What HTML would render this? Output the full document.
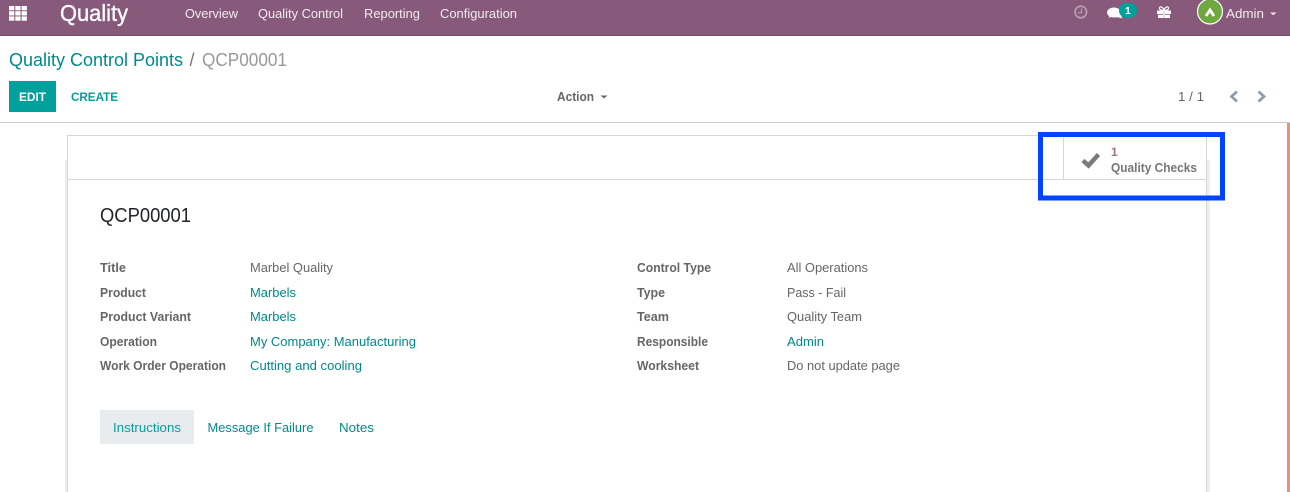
<!DOCTYPE html>
<html><head><meta charset="utf-8"><style>
html,body{margin:0;padding:0;background:#fff;width:1290px;height:492px;overflow:hidden}
svg{display:block}
text{font-family:"Liberation Sans",sans-serif;font-size:13px}
.n{fill:#f3eaf0;font-size:13px}
.b{font-weight:bold;fill:#666;font-size:12.5px}
.v{fill:#666}
.l{fill:#00898c}
</style></head><body>
<svg width="1290" height="492" viewBox="0 0 1290 492" xmlns="http://www.w3.org/2000/svg">
<rect width="1290" height="492" fill="#fff"/>
<rect width="1290" height="35" fill="#875A7B"/>
<rect y="35" width="1290" height="1" fill="#6f4a66"/>
<g fill="#fff">
<rect x="9" y="6" width="5.300" height="4.300"/><rect x="15.300" y="6" width="5.300" height="4.300"/><rect x="21.600" y="6" width="5.300" height="4.300"/>
<rect x="9" y="11.200" width="5.300" height="4.300"/><rect x="15.300" y="11.200" width="5.300" height="4.300"/><rect x="21.600" y="11.200" width="5.300" height="4.300"/>
<rect x="9" y="16.400" width="5.300" height="4.300"/><rect x="15.300" y="16.400" width="5.300" height="4.300"/><rect x="21.600" y="16.400" width="5.300" height="4.300"/>
</g>
<text x="60" y="21" fill="#fff" stroke="#fff" stroke-width=".35" style="font-size:23px" textLength="68" lengthAdjust="spacingAndGlyphs">Quality</text>
<text class="n" x="185" y="18" textLength="53" lengthAdjust="spacingAndGlyphs">Overview</text>
<text class="n" x="258" y="18" textLength="85" lengthAdjust="spacingAndGlyphs">Quality Control</text>
<text class="n" x="364" y="18" textLength="56" lengthAdjust="spacingAndGlyphs">Reporting</text>
<text class="n" x="440" y="18" textLength="77" lengthAdjust="spacingAndGlyphs">Configuration</text>
<!-- clock -->
<circle cx="1080.800" cy="12" r="5.800" fill="none" stroke="#b9a3b4" stroke-width="1.600"/>
<path d="M1081.500 8.500V12.800H1078" fill="none" stroke="#b9a3b4" stroke-width="1.200"/>
<!-- chat -->
<ellipse cx="1114" cy="12.500" rx="7" ry="5" fill="#fff"/>
<path d="M1110 15l-1.500 3 4.500-2zM1117 15h5l-.5 2 1 1.500-3.500-1h-2z" fill="#fff"/>
<rect x="1119" y="3" width="18" height="15" rx="7.500" fill="#00A09D"/>
<text x="1125" y="14" fill="#fff" style="font-size:10.500px;font-weight:bold">1</text>
<!-- gift -->
<path d="M1157 10.500h6v3.500h-6zM1165 10.500h6v3.500h-6zM1158 14.800h5v3.200h-5zM1165 14.800h5v3.200h-5z" fill="#fff"/>
<rect x="1163" y="10.500" width="2" height="7.500" fill="#f0dbe8"/>
<path d="M1164 10.500c-2.500 0-5-.8-4.500-2.800.5-1.700 3.500-1 4.500 2.800zM1164 10.500c2.500 0 5-.8 4.500-2.800-.5-1.700-3.500-1-4.500 2.800z" fill="none" stroke="#fff" stroke-width="1.200"/>
<!-- avatar -->
<circle cx="1210" cy="11.500" r="12.500" fill="#6FA83F" stroke="#fff" stroke-width="1.200"/>
<path d="M1206 16l4-6 4 6" fill="none" stroke="#fff" stroke-width="2.800"/>
<text class="n" x="1226" y="18" textLength="38" lengthAdjust="spacingAndGlyphs">Admin</text>
<path d="M1270 12.500h6.500l-3.250 2.800z" fill="#f3eaf0"/>

<text x="9" y="66" fill="#00898c" style="font-size:18px" textLength="174" lengthAdjust="spacingAndGlyphs">Quality Control Points</text>
<text x="189.500" y="66" fill="#777" style="font-size:18px">/</text>
<text x="202" y="66" fill="#999" style="font-size:18px" textLength="85" lengthAdjust="spacingAndGlyphs">QCP00001</text>

<rect x="9" y="81" width="47" height="31" fill="#00A09D"/>
<text x="19" y="101" fill="#fff" style="font-size:12px;font-weight:bold" textLength="27" lengthAdjust="spacingAndGlyphs">EDIT</text>
<text x="71" y="101" fill="#00A09D" style="font-size:12px;font-weight:bold" textLength="47" lengthAdjust="spacingAndGlyphs">CREATE</text>
<text x="557" y="101" class="b" textLength="37" lengthAdjust="spacingAndGlyphs">Action</text>
<path d="M600.500 95.500h7l-3.500 3z" fill="#666"/>
<text x="1178" y="101" fill="#666" textLength="26" lengthAdjust="spacingAndGlyphs">1 / 1</text>
<path d="M1237 91.500l-5.500 5 5.500 5M1258.500 91.500l5.500 5-5.500 5" fill="none" stroke="#8f9cab" stroke-width="2.800"/>

<rect y="122" width="1290" height="1" fill="#ccc"/>
<rect x="1287" y="123" width="3" height="369" fill="#F0906C"/>

<rect x="65" y="160" width="2" height="332" fill="#eceef0"/>
<rect x="1207" y="160" width="3" height="332" fill="#eceef0"/>
<path d="M67.500 492V135.500H1206.500V492" fill="none" stroke="#d3d6dd"/>
<rect x="67" y="179" width="1140" height="1" fill="#d3d6dd"/>
<rect x="1063" y="136" width="1" height="43" fill="#d3d6dd"/>

<path d="M1083 160.500l5.500 5 10-11" fill="none" stroke="#7a7a7a" stroke-width="4.500"/>
<text x="1111" y="156" fill="#a0708f" style="font-size:12px;font-weight:bold">1</text>
<text x="1111" y="172" class="b" style="fill:#777" textLength="86" lengthAdjust="spacingAndGlyphs">Quality Checks</text>

<rect x="1040.500" y="134.500" width="182" height="63.500" fill="none" stroke="#0044FF" stroke-width="5"/>

<text x="100" y="222" fill="#212529" style="font-size:20px" textLength="91" lengthAdjust="spacingAndGlyphs">QCP00001</text>

<text class="b" x="100" y="272" textLength="26" lengthAdjust="spacingAndGlyphs">Title</text>
<text class="b" x="100" y="297" textLength="46" lengthAdjust="spacingAndGlyphs">Product</text>
<text class="b" x="100" y="321" textLength="91" lengthAdjust="spacingAndGlyphs">Product Variant</text>
<text class="b" x="100" y="346" textLength="57" lengthAdjust="spacingAndGlyphs">Operation</text>
<text class="b" x="100" y="370" textLength="126" lengthAdjust="spacingAndGlyphs">Work Order Operation</text>

<text class="v" x="250" y="272" textLength="83" lengthAdjust="spacingAndGlyphs">Marbel Quality</text>
<text class="l" x="250" y="297" textLength="46" lengthAdjust="spacingAndGlyphs">Marbels</text>
<text class="l" x="250" y="321" textLength="46" lengthAdjust="spacingAndGlyphs">Marbels</text>
<text class="l" x="250" y="346" textLength="166" lengthAdjust="spacingAndGlyphs">My Company: Manufacturing</text>
<text class="l" x="250" y="370" textLength="112" lengthAdjust="spacingAndGlyphs">Cutting and cooling</text>

<text class="b" x="637" y="272" textLength="74" lengthAdjust="spacingAndGlyphs">Control Type</text>
<text class="b" x="637" y="297" textLength="28" lengthAdjust="spacingAndGlyphs">Type</text>
<text class="b" x="637" y="321" textLength="32" lengthAdjust="spacingAndGlyphs">Team</text>
<text class="b" x="637" y="346" textLength="71" lengthAdjust="spacingAndGlyphs">Responsible</text>
<text class="b" x="637" y="370" textLength="62" lengthAdjust="spacingAndGlyphs">Worksheet</text>

<text class="v" x="787" y="272" textLength="81" lengthAdjust="spacingAndGlyphs">All Operations</text>
<text class="v" x="787" y="297" textLength="59" lengthAdjust="spacingAndGlyphs">Pass - Fail</text>
<text class="v" x="787" y="321" textLength="75" lengthAdjust="spacingAndGlyphs">Quality Team</text>
<text class="l" x="787" y="346" textLength="37" lengthAdjust="spacingAndGlyphs">Admin</text>
<text class="v" x="787" y="370" textLength="113" lengthAdjust="spacingAndGlyphs">Do not update page</text>

<rect x="100" y="410" width="94" height="34" fill="#E9ECEF"/>
<text x="113" y="432" fill="#00A09D" textLength="68" lengthAdjust="spacingAndGlyphs">Instructions</text>
<text class="l" x="207.500" y="432" textLength="106" lengthAdjust="spacingAndGlyphs">Message If Failure</text>
<text class="l" x="339" y="432" textLength="35" lengthAdjust="spacingAndGlyphs">Notes</text>
</svg>
</body></html>
